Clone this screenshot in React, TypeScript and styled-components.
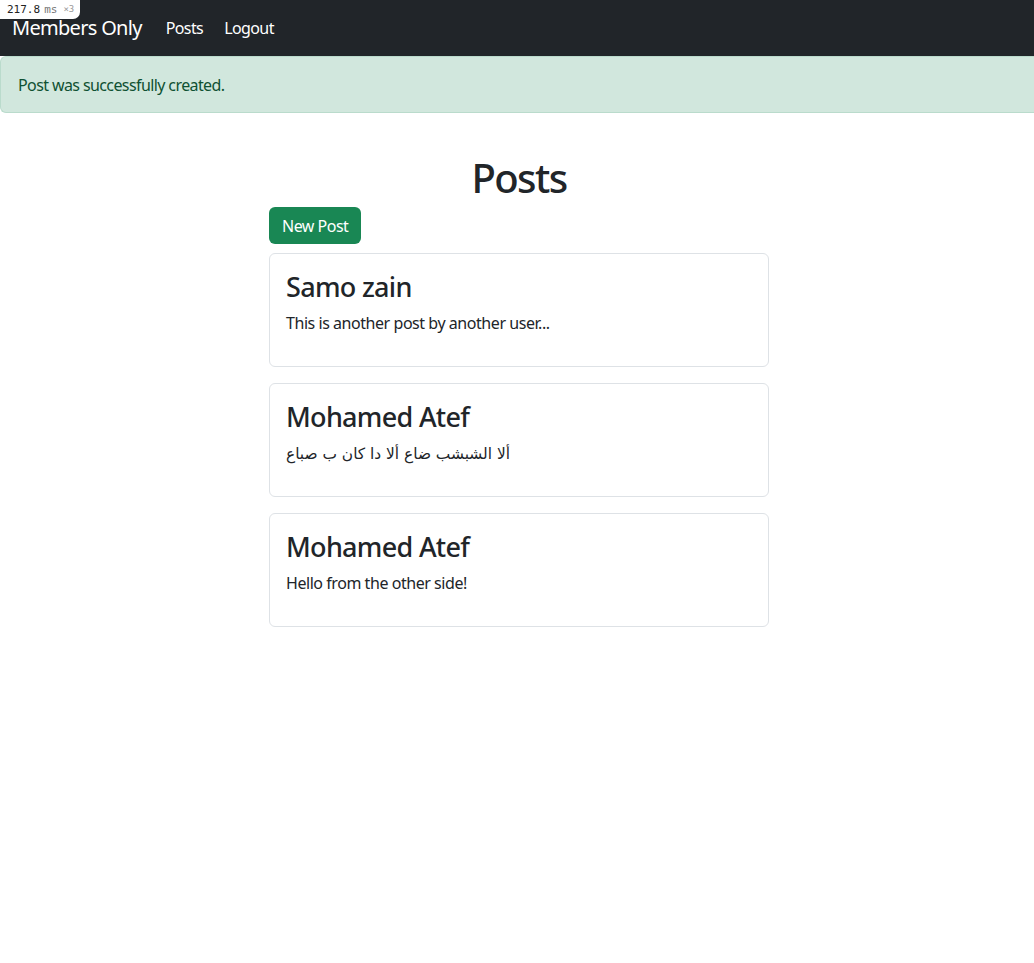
import React from "react";
import styled, { createGlobalStyle } from "styled-components";

const GlobalStyle = createGlobalStyle`
  *, *::before, *::after { box-sizing: border-box; }
  html, body { margin: 0; padding: 0; }
  body {
    font-family: "Noto Sans", "Open Sans", "Liberation Sans", sans-serif;
    font-size: 16px;
    line-height: 1.5;
    color: #212529;
    background: #fff;
  }
`;

const Page = styled.div`
  position: relative;
  min-height: 963px;
`;

const ProfilerBadge = styled.div`
  position: absolute;
  top: 0;
  left: 0;
  z-index: 10;
  height: 19px;
  padding: 0 6px 0 7px;
  display: flex;
  align-items: center;
  gap: 4px;
  background: #fff;
  border-bottom-right-radius: 7px;
  font-family: "DejaVu Sans Mono", "Liberation Mono", monospace;
  font-size: 11px;
  line-height: 1;
  color: #222;
`;

const BadgeUnit = styled.span`
  color: #777;
  margin-right: 2px;
`;

const BadgeCount = styled.span`
  color: #999;
  font-size: 9px;
`;

const Navbar = styled.nav`
  height: 56px;
  background: #212529;
  padding: 8px 12px;
  display: flex;
  align-items: center;
`;

const Brand = styled.a`
  font-size: 20px;
  line-height: 30px;
  padding: 5px 0;
  margin-right: 24px;
  color: #fff;
  text-decoration: none;
  letter-spacing: -0.7px;
`;

const NavLinks = styled.div`
  display: flex;
  gap: 21px;
`;

const NavLink = styled.a`
  color: #fff;
  font-size: 16px;
  line-height: 24px;
  text-decoration: none;
  letter-spacing: -0.6px;
`;

const Alert = styled.div`
  background: #d1e7dd;
  border: 1px solid #badbcc;
  border-right: none;
  border-radius: 6px 0 0 6px;
  color: #0f5132;
  padding: 16px 16px 15px 17px;
  font-size: 16px;
  line-height: 24px;
  letter-spacing: -0.6px;
`;

const Main = styled.main`
  padding-left: 4px;
  padding-top: 41px;
`;

const Container = styled.div`
  width: 500px;
  margin: 0 auto;
`;

const Title = styled.h1`
  margin: 0 0 5px;
  font-size: 40px;
  line-height: 1.2;
  font-weight: 500;
  text-align: center;
  letter-spacing: -1.6px;
`;

const Button = styled.a`
  display: inline-block;
  background: #198754;
  color: #fff;
  border-radius: 6px;
  padding: 7px 13px 6px 13px;
  font-size: 16px;
  line-height: 24px;
  text-decoration: none;
  margin-bottom: 9px;
  letter-spacing: -0.5px;
`;

const CardList = styled.div`
  display: flex;
  flex-direction: column;
  gap: 16px;
`;

const Card = styled.div`
  border: 1px solid #dee2e6;
  border-radius: 6px;
  padding: 16px;
  height: 114px;
`;

const CardTitle = styled.h2`
  margin: 0 0 8px;
  font-size: 27px;
  line-height: 33px;
  font-weight: 500;
  letter-spacing: -0.7px;
`;

const CardText = styled.p<{ $rtl?: boolean }>`
  margin: 0;
  font-size: 16px;
  line-height: 24px;
  letter-spacing: ${(p) => (p.$rtl ? "0" : "-0.45px")};
  direction: ${(p) => (p.$rtl ? "rtl" : "ltr")};
  ${(p) =>
    p.$rtl
      ? "display: inline-block; font-family: 'DejaVu Sans', 'Noto Sans', sans-serif; font-size: 15.4px;"
      : ""}
`;

const posts = [
  { author: "Samo zain", body: "This is another post by another user...", rtl: false },
  { author: "Mohamed Atef", body: "ألا الشبشب ضاع ألا دا كان ب صباع", rtl: true },
  { author: "Mohamed Atef", body: "Hello from the other side!", rtl: false },
];

export default function App() {
  return (
    <Page>
      <GlobalStyle />
      <ProfilerBadge>
        <span>217.8</span>
        <BadgeUnit>ms</BadgeUnit>
        <BadgeCount>×3</BadgeCount>
      </ProfilerBadge>
      <Navbar>
        <Brand href="#">Members Only</Brand>
        <NavLinks>
          <NavLink href="#">Posts</NavLink>
          <NavLink href="#">Logout</NavLink>
        </NavLinks>
      </Navbar>
      <Alert>Post was successfully created.</Alert>
      <Main>
        <Container>
          <Title>Posts</Title>
          <Button href="#">New Post</Button>
          <CardList>
            {posts.map((p, i) => (
              <Card key={i}>
                <CardTitle>{p.author}</CardTitle>
                <CardText $rtl={p.rtl}>{p.body}</CardText>
              </Card>
            ))}
          </CardList>
        </Container>
      </Main>
    </Page>
  );
}
